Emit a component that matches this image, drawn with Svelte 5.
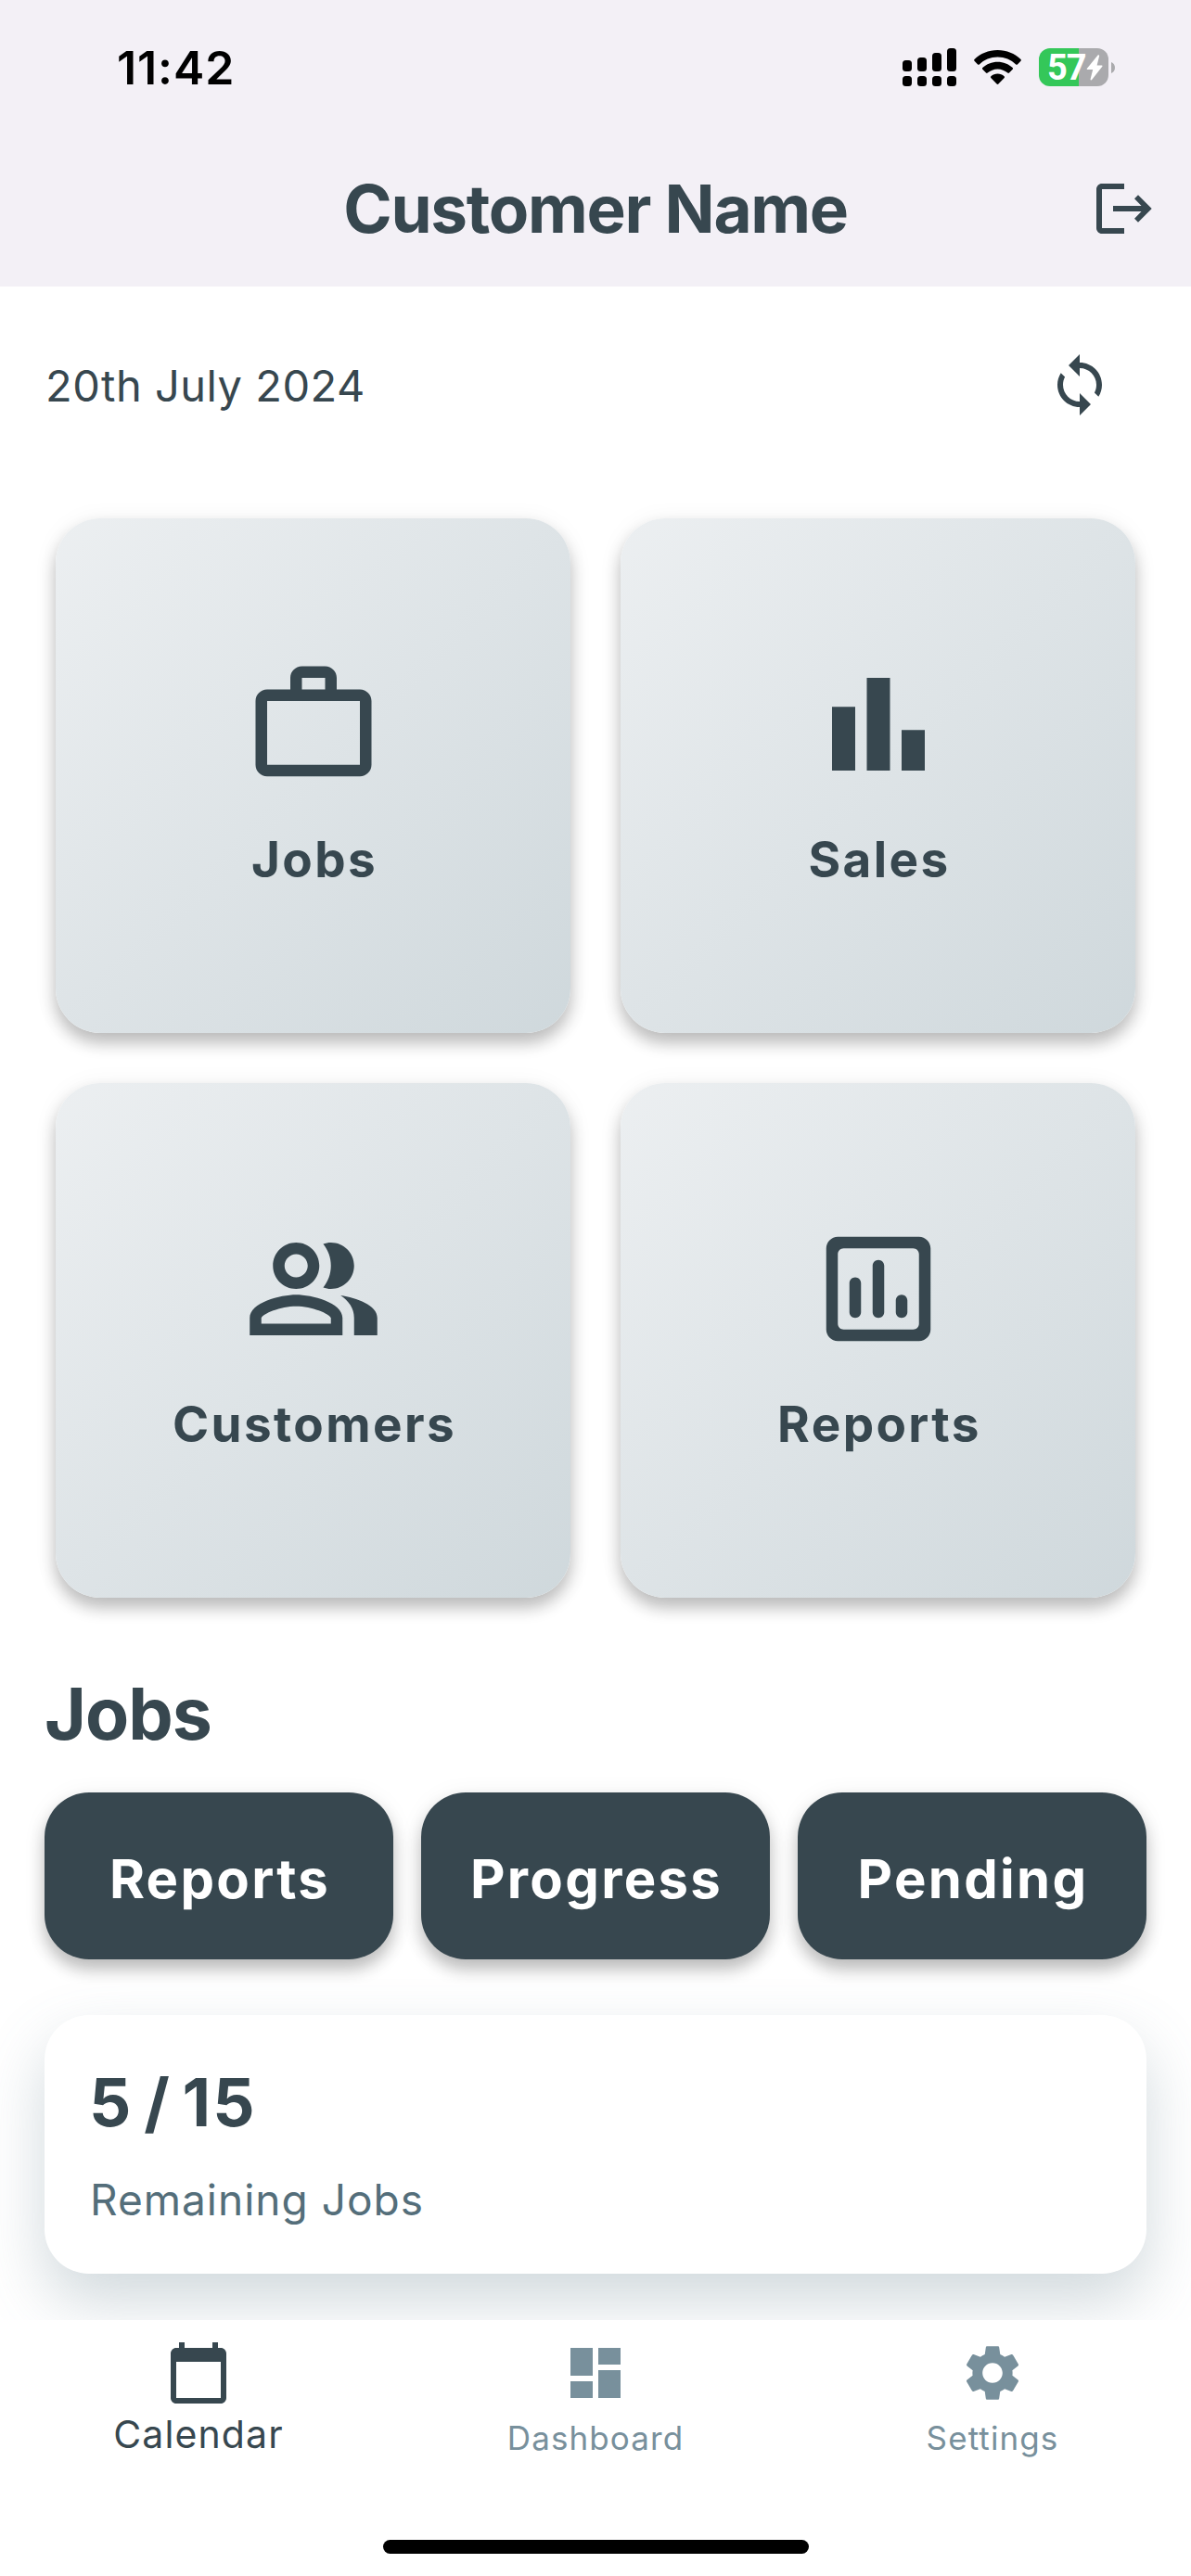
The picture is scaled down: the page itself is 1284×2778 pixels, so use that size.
<script lang="ts">
  type Tile = { label: string; icon: string };

  const tiles: Tile[] = [
    {
      label: "Jobs",
      icon: "M14 6V4h-4v2h4zM4 8v11h16V8H4zm16-2c1.11 0 2 .89 2 2v11c0 1.11-.89 2-2 2H4c-1.11 0-2-.89-2-2V8c0-1.11.89-2 2-2h4V4c0-1.11.89-2 2-2h4c1.11 0 2 .89 2 2v2h4z",
    },
    {
      label: "Sales",
      icon: "M4 9h4v11H4zM16 13h4v7h-4zM10 4h4v16h-4z",
    },
    {
      label: "Customers",
      icon: "M16.67 13.13C18.04 14.06 19 15.32 19 17v3h4v-3c0-2.18-3.57-3.47-6.33-3.87zM15 12c2.21 0 4-1.79 4-4s-1.79-4-4-4c-.47 0-.91.1-1.33.24C14.5 5.27 15 6.58 15 8s-.5 2.73-1.33 3.76c.42.14.86.24 1.33.24zM9 12c2.21 0 4-1.79 4-4s-1.79-4-4-4-4 1.79-4 4 1.79 4 4 4zm0-6c1.1 0 2 .9 2 2s-.9 2-2 2-2-.9-2-2 .9-2 2-2zM9 13c-2.67 0-8 1.34-8 4v3h16v-3c0-2.66-5.33-4-8-4zm6 5H3v-.99C3.2 16.29 6.3 15 9 15s5.8 1.29 6 2v1z",
    },
    {
      label: "Reports",
      icon: "M8 10c.55 0 1 .45 1 1v5c0 .55-.45 1-1 1s-1-.45-1-1v-5c0-.55.45-1 1-1zM12 7c.55 0 1 .45 1 1v8c0 .55-.45 1-1 1s-1-.45-1-1V8c0-.55.45-1 1-1zM16 13c.55 0 1 .45 1 1v2c0 .55-.45 1-1 1s-1-.45-1-1v-2c0-.55.45-1 1-1zM19 3H5c-1.1 0-2 .9-2 2v14c0 1.1.9 2 2 2h14c1.1 0 2-.9 2-2V5c0-1.1-.9-2-2-2zm-1 16H6c-.55 0-1-.45-1-1V6c0-.55.45-1 1-1h12c.55 0 1 .45 1 1v12c0 .55-.45 1-1 1z",
    },
  ];

  const filters = ["Reports", "Progress", "Pending"];

  const tabs = [
    {
      label: "Calendar",
      icon: "M20 3h-1V1h-2v2H7V1H5v2H4c-1.1 0-2 .9-2 2v16c0 1.1.9 2 2 2h16c1.1 0 2-.9 2-2V5c0-1.1-.9-2-2-2zm0 18H4V8h16v13z",
    },
    {
      label: "Dashboard",
      icon: "M3 13h8V3H3v10zm0 8h8v-6H3v6zm10 0h8V11h-8v10zm0-18v6h8V3h-8z",
    },
    {
      label: "Settings",
      icon: "M19.14 12.94c.04-.3.06-.61.06-.94 0-.32-.02-.64-.07-.94l2.03-1.58c.18-.14.23-.41.12-.61l-1.92-3.32c-.12-.22-.37-.29-.59-.22l-2.39.96c-.5-.38-1.03-.7-1.62-.94l-.36-2.54c-.04-.24-.24-.41-.48-.41h-3.84c-.24 0-.43.17-.47.41l-.36 2.54c-.59.24-1.13.57-1.62.94l-2.39-.96c-.22-.08-.47 0-.59.22L2.74 8.87c-.12.21-.08.47.12.61l2.03 1.58c-.05.3-.09.63-.09.94s.02.64.07.94l-2.03 1.58c-.18.14-.23.41-.12.61l1.92 3.32c.12.22.37.29.59.22l2.39-.96c.5.38 1.03.7 1.62.94l.36 2.54c.05.24.24.41.48.41h3.84c.24 0 .44-.17.47-.41l.36-2.54c.59-.24 1.13-.56 1.62-.94l2.39.96c.22.08.47 0 .59-.22l1.92-3.32c.12-.22.07-.47-.12-.61l-2.01-1.58zM12 15.6c-1.98 0-3.6-1.62-3.6-3.6s1.62-3.6 3.6-3.6 3.6 1.62 3.6 3.6-1.62 3.6-3.6 3.6z",
    },
  ];

  let activeTab = "Calendar";
</script>

<div class="screen">
  <header>
    <div class="statusBar">
      <span class="time">11:42</span>
      <div class="indicators">
        <svg class="signal" viewBox="0 0 58 41">
          <rect x="0" y="13" width="10" height="12" rx="3.5" />
          <rect x="16" y="10" width="10" height="15" rx="3.5" />
          <rect x="32" y="5" width="10" height="20" rx="3.5" />
          <rect x="48" y="0" width="10" height="25" rx="3.5" />
          <rect x="0" y="30" width="10" height="11" rx="3.5" />
          <rect x="16" y="30" width="10" height="11" rx="3.5" />
          <rect x="32" y="30" width="10" height="11" rx="3.5" />
          <rect x="48" y="30" width="10" height="11" rx="3.5" />
        </svg>
        <svg class="wifi" viewBox="0 0 51 38">
          <path d="M25.5 0C35.3 0 44.1 3.8 50.5 10c.5.5.5 1.2 0 1.7l-3.6 3.7c-.5.5-1.2.5-1.7 0C40 10.5 33.1 7.5 25.5 7.5S11 10.5 5.8 15.4c-.5.5-1.2.5-1.7 0L.5 11.7c-.5-.5-.5-1.2 0-1.7C6.9 3.8 15.7 0 25.5 0z" />
          <path d="M25.5 12.8c6.2 0 11.9 2.4 16.2 6.3.5.5.5 1.2 0 1.7l-3.7 3.7c-.5.5-1.2.5-1.7.1-2.9-2.6-6.7-4.2-10.8-4.2s-7.9 1.6-10.8 4.2c-.5.4-1.2.4-1.7-.1l-3.7-3.7c-.5-.5-.5-1.2 0-1.7 4.3-3.9 10-6.3 16.2-6.3z" />
          <path d="M25.5 25.6c2.7 0 5.2 1 7.1 2.6.5.5.5 1.2.1 1.7l-6.3 6.7c-.5.5-1.3.5-1.8 0l-6.3-6.7c-.4-.5-.4-1.2.1-1.7 1.9-1.6 4.4-2.6 7.1-2.6z" />
        </svg>
        <div class="battery">
          <div class="cell">
            <span>57</span>
            <svg viewBox="0 0 18 28"><path d="M12.6.5 1 14.8c-.5.7-.3 1.3.5 1.3h5.7L4.6 26.3c-.3 1.2.8 1.5 1.5.7L17.3 12.8c.5-.7.3-1.3-.5-1.3h-5.2l2.5-10c.3-1.2-.8-1.8-1.5-1z" /></svg>
          </div>
          <svg class="nub" viewBox="0 0 4 12"><path d="M0 0c2.5 1 4 3.3 4 6s-1.5 5-4 6z" /></svg>
        </div>
      </div>
    </div>
    <div class="appBar">
      <h1>Customer Name</h1>
      <svg class="logout" viewBox="0 0 24 24">
        <path d="M5 3h8v2H5v14h8v2H5c-1.1 0-2-.9-2-2V5c0-1.1.9-2 2-2z" />
        <path d="M18 7.1l-1.33 1.33L19.17 11H9v2h10.17l-2.5 2.57L18 16.9 22.9 12z" />
      </svg>
    </div>
  </header>

  <main>
    <div class="dateRow">
      <span>20th July 2024</span>
      <svg viewBox="0 0 24 24">
        <path d="M12 4V1L8 5l4 4V6c3.31 0 6 2.69 6 6 0 1.01-.25 1.97-.7 2.8l1.46 1.46C19.54 15.03 20 13.57 20 12c0-4.42-3.58-8-8-8zm0 14c-3.31 0-6-2.69-6-6 0-1.01.25-1.97.7-2.8L5.24 7.74C4.46 8.97 4 10.43 4 12c0 4.42 3.58 8 8 8v3l4-4-4-4v3z" />
      </svg>
    </div>

    <div class="tiles">
      {#each tiles as tile}
        <div class="tile">
          <svg viewBox="0 0 24 24"><path fill-rule="evenodd" d={tile.icon} /></svg>
          <span>{tile.label}</span>
        </div>
      {/each}
    </div>

    <h2>Jobs</h2>

    <div class="filters">
      {#each filters as filter}
        <button type="button">{filter}</button>
      {/each}
    </div>

    <div class="summary">
      <div class="count">5 / 15</div>
      <div class="caption">Remaining Jobs</div>
    </div>
  </main>

  <nav>
    <div class="tabs">
      {#each tabs as tab}
        <div class="tab" class:active={tab.label === activeTab}>
          <svg viewBox="0 0 24 24"><path d={tab.icon} /></svg>
          <span>{tab.label}</span>
        </div>
      {/each}
    </div>
    <div class="homeIndicator"></div>
  </nav>
</div>

<style>
  :global(body){
    background: #fff;
  }
  .screen{
    width: 1284px;
    height: 2778px;
    display: flex;
    flex-direction: column;
    overflow: hidden;
    background: #fff;
    color: #37474f;
    font-family: Inter, "Liberation Sans", sans-serif;
    font-feature-settings: "calt" 0;
  }
  svg{
    display: block;
    flex: none;
    fill: currentColor;
  }

  header{
    flex: none;
    background: #f3f0f6;
  }
  .statusBar{
    height: 141px;
    box-sizing: border-box;
    padding: 4px 82px 0 126px;
    display: flex;
    justify-content: space-between;
    align-items: center;
    color: #000;
  }
  .time{
    font-size: 50px;
    font-weight: 600;
    letter-spacing: 0.9px;
  }
  .indicators{
    display: flex;
    align-items: center;
  }
  .signal{
    width: 58px;
    height: 41px;
  }
  .wifi{
    width: 51px;
    height: 38px;
    margin: 0 19px;
  }
  .battery{
    display: flex;
    align-items: center;
    gap: 3px;
  }
  .cell{
    width: 75px;
    height: 41px;
    box-sizing: border-box;
    padding-left: 9px;
    display: flex;
    align-items: center;
    gap: 1px;
    border-radius: 12px;
    background: linear-gradient(90deg, #34c759 43px, #aaaaad 43px);
    color: #fff;
    font-family: Roboto, sans-serif;
    font-size: 38px;
    font-weight: 700;
    letter-spacing: -1px;
  }
  .cell span{
    width: 41px;
  }
  .cell svg{
    width: 18px;
    height: 28px;
  }
  .nub{
    width: 4px;
    height: 12px;
    color: #aaaaad;
  }

  .appBar{
    height: 168px;
    display: grid;
    grid-template-columns: 111px 1fr 111px;
    align-items: center;
  }
  h1{
    grid-column: 2;
    margin: 0;
    text-align: center;
    font-size: 71px;
    font-weight: 700;
    letter-spacing: -1.3px;
  }
  .logout{
    width: 72px;
    height: 72px;
  }

  main{
    flex: 1;
    min-height: 0;
    overflow: hidden;
    padding: 34px 48px 0;
  }
  .dateRow{
    height: 144px;
    padding-left: 1px;
    display: flex;
    justify-content: space-between;
    align-items: center;
    font-size: 47px;
    letter-spacing: 0.5px;
  }
  .dateRow svg{
    width: 72px;
    height: 72px;
    margin-right: 36px;
  }

  .tiles{
    margin: 72px 12px 0;
    display: grid;
    grid-template-columns: 555px 555px;
    grid-auto-rows: 555px;
    gap: 54px;
  }
  .tile{
    box-sizing: border-box;
    padding-top: 147px;
    display: flex;
    flex-direction: column;
    align-items: center;
    gap: 39px;
    border-radius: 48px;
    background: linear-gradient(135deg, #eceff1, #cfd8dc);
    box-shadow: 0 11px 17px rgba(0, 0, 0, 0.24), 0 3px 28px rgba(0, 0, 0, 0.06);
    font-size: 53px;
    font-weight: 700;
    line-height: 64px;
    letter-spacing: 2.4px;
  }
  .tile svg{
    width: 150px;
    height: 150px;
  }
  .tile span{
    padding-left: 3px;
  }

  h2{
    margin: 78px 0 38px;
    font-size: 77px;
    font-weight: 700;
    line-height: 94px;
    letter-spacing: -1px;
  }

  .filters{
    display: grid;
    grid-template-columns: repeat(3, 1fr);
    gap: 30px;
  }
  .filters button{
    height: 180px;
    padding: 6px 0 0 2px;
    border: 0;
    border-radius: 48px;
    background: #37474f;
    box-shadow: 0 11px 17px rgba(0, 0, 0, 0.24), 0 3px 28px rgba(0, 0, 0, 0.06);
    color: #fff;
    font-family: inherit;
    font-size: 58px;
    font-weight: 700;
    letter-spacing: 2.3px;
  }

  .summary{
    height: 279px;
    margin-top: 60px;
    box-sizing: border-box;
    padding: 51px 48px 0;
    border-radius: 48px;
    background: #fff;
    box-shadow: 0 30px 66px rgba(96, 125, 139, 0.29);
  }
  .count{
    font-size: 71px;
    font-weight: 700;
    line-height: 86px;
    letter-spacing: 2px;
    word-spacing: -7px;
  }
  .caption{
    margin-top: 33px;
    padding-left: 1px;
    color: #546e7a;
    font-size: 46px;
    line-height: 58px;
    letter-spacing: 1px;
  }

  nav{
    flex: none;
    height: 276px;
    display: flex;
    flex-direction: column;
    justify-content: space-between;
    align-items: center;
    background: #fff;
  }
  .tabs{
    width: 100%;
    display: grid;
    grid-template-columns: repeat(3, 1fr);
  }
  .tab{
    padding-top: 21px;
    display: flex;
    flex-direction: column;
    align-items: center;
    gap: 13px;
    color: #78909c;
    font-size: 35px;
    line-height: 43px;
    letter-spacing: 1.1px;
  }
  .tab svg{
    width: 72px;
    height: 72px;
  }
  .tab.active{
    gap: 5px;
    color: #37474f;
    font-size: 41px;
    line-height: 50px;
  }
  .homeIndicator{
    width: 459px;
    height: 15px;
    margin-bottom: 24px;
    border-radius: 8px;
    background: #000;
  }
</style>
